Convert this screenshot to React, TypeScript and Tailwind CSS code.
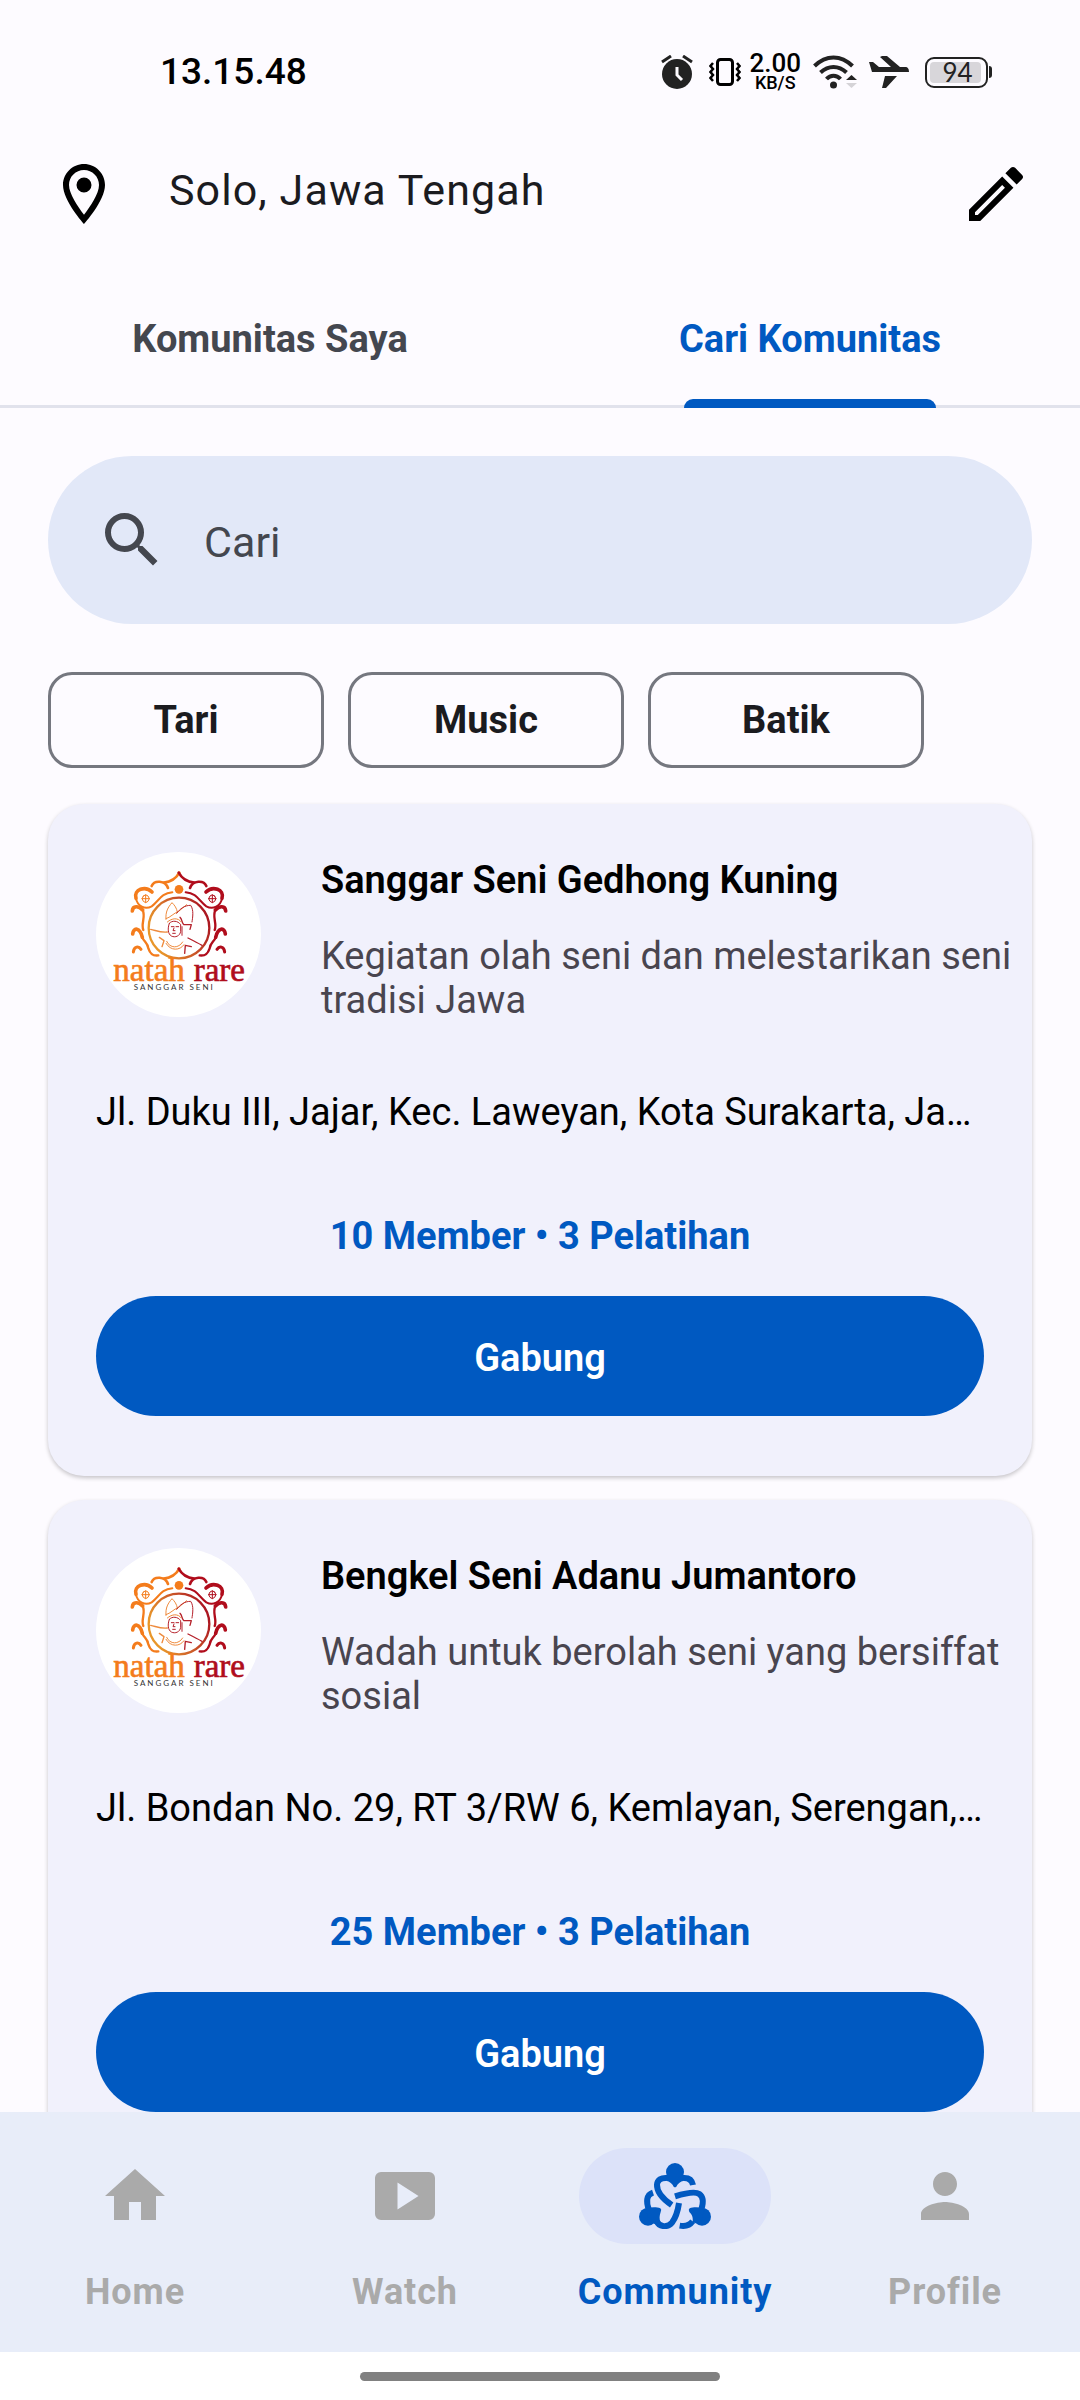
import { useState } from "react";
import type { ReactNode } from "react";

type Community = {
  name: string;
  description: string;
  address: string;
  members: number;
  trainings: number;
};

const communities: Community[] = [
  {
    name: "Sanggar Seni Gedhong Kuning",
    description: "Kegiatan olah seni dan melestarikan seni tradisi Jawa",
    address: "Jl. Duku III, Jajar, Kec. Laweyan, Kota Surakarta, Jawa Tengah 57144",
    members: 10,
    trainings: 3,
  },
  {
    name: "Bengkel Seni Adanu Jumantoro",
    description: "Wadah untuk berolah seni yang bersiffat sosial",
    address: "Jl. Bondan No. 29, RT 3/RW 6, Kemlayan, Serengan, Kota Surakarta",
    members: 25,
    trainings: 3,
  },
];

function MaterialIcon({ d, className }: { d: string; className: string }) {
  return (
    <svg viewBox="0 0 24 24" fill="currentColor" className={className} aria-hidden="true">
      <path d={d} fillRule="evenodd" />
    </svg>
  );
}

const icons = {
  pin: "M12 2C8.13 2 5 5.13 5 9c0 5.25 7 13 7 13s7-7.75 7-13c0-3.87-3.13-7-7-7zM7 9c0-2.76 2.24-5 5-5s5 2.24 5 5c0 2.88-2.88 7.19-5 9.88C9.92 16.21 7 11.85 7 9zM12 6.5a2.5 2.5 0 1 0 0 5 2.5 2.5 0 0 0 0-5z",
  edit: "M14.06 9.02l.92.92L5.92 19H5v-.92l9.06-9.06M17.66 3c-.25 0-.51.1-.7.29l-1.83 1.83 3.75 3.75 1.83-1.83c.39-.39.39-1.02 0-1.41l-2.34-2.34c-.2-.2-.45-.29-.71-.29zm-3.6 3.19L3 17.25V21h3.75L17.81 9.94l-3.75-3.75z",
  search:
    "M15.5 14h-.79l-.28-.27A6.471 6.471 0 0 0 16 9.5 6.5 6.5 0 1 0 9.5 16c1.61 0 3.09-.59 4.23-1.57l.27.28v.79l5 4.99L20.49 19l-4.99-5zm-6 0C7.01 14 5 11.99 5 9.5S7.01 5 9.5 5 14 7.01 14 9.5 11.99 14 9.5 14z",
  home: "M10 20v-6h4v6h5v-8h3L12 3 2 12h3v8z",
  watch:
    "M4 4h16a2 2 0 0 1 2 2v12a2 2 0 0 1-2 2H4a2 2 0 0 1-2-2V6a2 2 0 0 1 2-2zM9.5 7.5v9l7-4.5z",
  profile:
    "M12 12c2.21 0 4-1.79 4-4s-1.79-4-4-4-4 1.79-4 4 1.79 4 4 4zm0 2c-2.67 0-8 1.34-8 4v2h16v-2c0-2.66-5.33-4-8-4z",
};

function CommunityIcon() {
  return (
    <svg viewBox="237 159 216 198" className="h-[66px] w-[72px]" aria-hidden="true">
      <g fill="currentColor">
        <circle cx="345" cy="186" r="27" />
        <circle cx="264" cy="320" r="27" />
        <circle cx="426" cy="320" r="27" />
        <path d="M318 195H372V212C361 214 352 222 349 230Q345 234 341 230C338 222 329 214 318 212z" />
        <path d="M258 293C275 292 290 290 301 295Q306 299 302 306C298 318 298 326 301 335L284 342L264 330z" />
        <path d="M432 293C415 292 400 290 389 295Q384 299 388 306C396 314 400 322 398 337L408 340L426 330z" />
      </g>
      <g fill="none" stroke="currentColor" strokeWidth="18">
        <path d="M335 285C310 268 290 246 291 224C292 209 304 203 320 204" />
        <path d="M370 204C387 203 396 210 399 225" />
        <path d="M345 259C378 249 405 243 418 252C432 262 430 280 424 298" />
        <path d="M359 347C376 350 388 348 398 334" />
        <path d="M357 279C354 300 348 322 336 338C324 353 298 352 290 334" />
        <path d="M279 248C258 255 258 277 267 300" />
      </g>
    </svg>
  );
}

function LogoFrameHalf() {
  return (
    <g>
      <path d="M298 128C286 150 268 156 252 158" strokeWidth="8" />
      <path d="M215 168C222 150 256 150 264 174" strokeWidth="8" />
      <path d="M216 186C196 166 160 178 168 205" strokeWidth="11" />
      <path d="M168 205C172 228 195 240 215 229C238 212 242 190 277 187" strokeWidth="6" />
      <path d="M157 243C158 226 176 227 188 240" strokeWidth="11" />
      <path d="M188 240C198 262 182 280 190 300" strokeWidth="7" />
      <path d="M158 312C160 291 180 292 187 322" strokeWidth="11" />
      <path d="M187 322C192 336 203 338 205 355C212 376 222 378 235 376" strokeWidth="7" />
      <path d="M160 366C162 349 176 347 183 358" strokeWidth="9" />
      <path
        d="M197 195v22M186 206h22M190 198q7-8 14 0q8 8 0 16q-7 8-14 0q-8-8 0-16z"
        strokeWidth="3"
      />
    </g>
  );
}

function NatahRareLogo() {
  return (
    <svg
      viewBox="48 66 495 495"
      className="size-[165px] shrink-0 rounded-full bg-white"
      role="img"
      aria-label="natah rare sanggar seni"
    >
      <defs>
        <linearGradient id="natah-ring" x1="0" x2="1" y1="0.7" y2="0.3">
          <stop offset="0.1" stopColor="#e8962a" />
          <stop offset="0.55" stopColor="#cc5a28" />
          <stop offset="1" stopColor="#a81020" />
        </linearGradient>
      </defs>
      <g fill="none" strokeLinecap="round" strokeLinejoin="round">
        <g stroke="#f47c1c">
          <LogoFrameHalf />
        </g>
        <g stroke="#b00d1c" transform="translate(594 0) scale(-1 1)">
          <LogoFrameHalf />
        </g>
        <circle cx="297" cy="294" r="91" stroke="url(#natah-ring)" strokeWidth="7" />
        <g stroke="#ee8a3c" strokeWidth="3">
          <path d="M258 268C256 245 264 232 276 218C284 226 290 234 292 246" />
          <path d="M258 266C272 262 280 250 296 244L320 224" />
          <path d="M262 276C276 264 294 262 304 276" />
          <path d="M212 298C230 302 240 308 262 306M238 322L252 332L246 350" strokeWidth="4" />
          <path d="M260 334C270 356 296 356 308 336M258 340C272 364 300 362 312 344" />
        </g>
        <g stroke="#b5202a" strokeWidth="3">
          <path d="M290 250C300 236 314 226 332 226C342 240 338 262 336 276" />
          <path d="M300 262C308 270 304 278 312 284H334L330 298" strokeWidth="4" />
          <path d="M268 280C262 296 264 312 274 318C286 324 300 318 302 304V284C294 272 276 270 268 280" />
          <path d="M274 290h8M288 290h8M282 294l-3 8h6M278 310h8M306 290v26" />
          <path d="M324 324C340 332 352 338 366 346M314 370L316 346L334 350" strokeWidth="4" />
        </g>
      </g>
      <circle cx="297" cy="178" r="13" fill="#f47c1c" />
      <g fontFamily="'Liberation Serif', serif" fontSize="99">
        <text x="100" y="453" fill="#f47c1c" stroke="#f47c1c" strokeWidth="2">
          natah
        </text>
        <text x="341" y="453" fill="#b00d1c" stroke="#b00d1c" strokeWidth="2">
          rare
        </text>
      </g>
      <text
        x="161"
        y="480"
        fontSize="24"
        letterSpacing="6"
        fontFamily="Lato, sans-serif"
        fill="#333333"
      >
        SANGGAR SENI
      </text>
    </svg>
  );
}

function StatusBar() {
  return (
    <div className="flex h-36 items-center justify-between pr-[88px] pl-40">
      <span className="text-[37px] leading-[48px] font-medium text-black">13.15.48</span>
      <div className="flex items-center text-[#222222]">
        <svg viewBox="0 0 32 34" className="mr-4 h-[34px] w-8" aria-hidden="true">
          <circle cx="16" cy="19" r="15" fill="currentColor" />
          <path d="M1 7l9-6M31 7l-9-6" stroke="currentColor" strokeWidth="3" />
          <path d="M16 12v8l5 5" fill="none" stroke="#fdfbff" strokeWidth="3" />
        </svg>
        <svg viewBox="0 0 32 28" className="mr-2 h-7 w-8 text-black" aria-hidden="true">
          <g fill="none" stroke="currentColor">
            <rect x="8.5" y="1.5" width="15" height="25" rx="3" strokeWidth="3" />
            <path
              d="M4 5L1.5 8 4 11 1.5 14 4 17 1.5 20 4 23M28 5l2.500 3-2.500 3 2.500 3-2.500 3 2.500 3-2.500 3"
              strokeWidth="2.5"
            />
          </g>
        </svg>
        <div className="mr-3 flex flex-col items-center font-medium text-black">
          <span className="text-[26px] leading-[22px]">2.00</span>
          <span className="text-[18px] leading-[18px]">KB/S</span>
        </div>
        <svg viewBox="0 0 44 34" className="mr-3 h-[34px] w-11" aria-hidden="true">
          <g fill="none" stroke="currentColor" strokeWidth="4">
            <path d="M1.500 11C13-.5 28-.5 39.500 11" />
            <path d="M7.500 17.500c8-7.500 18-7.500 26 0" />
            <path d="M13.500 24c4-4.500 10-4.500 14 0" />
          </g>
          <circle cx="20.5" cy="30" r="3.5" fill="currentColor" />
          <path d="M33 25l5.500-5 5.500 5z" fill="currentColor" />
          <path d="M33 28l5.500 5 5.500-5z" fill="#d5d3d7" />
        </svg>
        <svg viewBox="0 0 40 32" className="mr-4 h-8 w-10" fill="currentColor" aria-hidden="true">
          <path d="M0 6h4l6 5h12L11 1l2-1h5l13 11h5c3 0 4 2 4 5H3zM16 20h12L17 32h-4z" />
        </svg>
        <div className="flex items-center">
          <div className="flex h-[31px] w-[63px] rounded-[9px] border-2 border-[#222222] p-[3px]">
            <div className="flex w-[51px] items-center justify-center rounded-[4px] bg-[#d8d6da] pl-1 font-[Lato] text-[26px] leading-[22px]">
              94
            </div>
          </div>
          <div className="ml-px h-3 w-[3px] rounded-r-sm bg-[#222222]" />
        </div>
      </div>
    </div>
  );
}

function CommunityCard({ community }: { community: Community }) {
  return (
    <article className="shrink-0 rounded-[36px] bg-[#f1f1fc] pt-12 pb-[60px] shadow-[0_2px_4px_rgba(0,0,0,0.22)]">
      <div className="flex gap-[60px] pr-5 pl-12">
        <NatahRareLogo />
        <div className="min-w-0 flex-1 pt-1">
          <h2 className="text-[38px] leading-[48px] font-semibold text-black">{community.name}</h2>
          <p className="mt-[30px] text-[38px] leading-[44px] text-[#49454f]">
            {community.description}
          </p>
        </div>
      </div>
      <div className="px-12">
        <p className="mt-[66px] truncate text-[38px] leading-[48px] text-black">
          {community.address}
        </p>
        <p className="mt-[76px] text-center text-[38px] leading-[48px] font-bold text-[#0059c1]">
          {community.members} Member • {community.trainings} Pelatihan
        </p>
        <button
          type="button"
          className="mt-9 h-[120px] w-full rounded-full bg-[#0059c1] pt-1 text-[38px] leading-[48px] font-semibold text-white"
        >
          Gabung
        </button>
      </div>
    </article>
  );
}

function NavItem({
  label,
  active,
  onSelect,
  children,
}: {
  label: string;
  active: boolean;
  onSelect: () => void;
  children: ReactNode;
}) {
  return (
    <button
      type="button"
      onClick={onSelect}
      aria-current={active ? "page" : undefined}
      className={
        active
          ? "flex flex-col items-center text-[#0059c1]"
          : "flex flex-col items-center text-[#aaaaaa]"
      }
    >
      <span
        className={
          active
            ? "flex h-24 w-48 items-center justify-center rounded-full bg-[#dce2f9]"
            : "flex h-24 w-48 items-center justify-center rounded-full"
        }
      >
        {children}
      </span>
      <span className="mt-6 text-[36px] leading-[48px] font-bold tracking-wide">{label}</span>
    </button>
  );
}

export default function App() {
  const [tab, setTab] = useState("Cari Komunitas");
  const [page, setPage] = useState("Community");

  return (
    <div className="flex h-screen flex-col overflow-hidden bg-[#fdfbff] font-[Roboto,sans-serif]">
      <StatusBar />

      <header className="flex h-[100px] items-center justify-between px-12">
        <div className="flex items-center gap-[49px]">
          <MaterialIcon d={icons.pin} className="size-[72px]" />
          <h1 className="mb-2 text-[43px] leading-[56px] tracking-wide text-[#1b1b1f]">
            Solo, Jawa Tengah
          </h1>
        </div>
        <button type="button" aria-label="Ubah lokasi">
          <MaterialIcon d={icons.edit} className="size-[72px]" />
        </button>
      </header>

      <div role="tablist" className="grid h-[164px] grid-cols-2 border-b-[3px] border-[#e1e2ec]">
        {["Komunitas Saya", "Cari Komunitas"].map((name) => (
          <button
            key={name}
            type="button"
            role="tab"
            aria-selected={tab === name}
            onClick={() => setTab(name)}
            className={
              tab === name
                ? "flex flex-col items-center justify-end text-[#0059c1]"
                : "flex flex-col items-center justify-end text-[#44474f]"
            }
          >
            <span className="mb-9 text-[38px] leading-[48px] font-bold">{name}</span>
            <span
              className={
                tab === name
                  ? "-mb-[3px] h-[9px] w-[252px] rounded-t-[9px] bg-[#0059c1]"
                  : "-mb-[3px] h-[9px] w-[252px]"
              }
            />
          </button>
        ))}
      </div>

      <main className="flex min-h-0 flex-1 flex-col px-12 pt-12">
        <label className="flex h-[168px] shrink-0 items-center gap-9 rounded-full bg-[#e2e8f8] px-12 text-[#44474f]">
          <MaterialIcon d={icons.search} className="size-[72px] shrink-0" />
          <input
            type="search"
            placeholder="Cari"
            aria-label="Cari"
            className="min-w-0 flex-1 bg-transparent pt-1 text-[43px] leading-[56px] outline-none placeholder:text-[#44474f]"
          />
        </label>

        <div className="mt-12 flex shrink-0 gap-6">
          {["Tari", "Music", "Batik"].map((name) => (
            <button
              key={name}
              type="button"
              className="h-24 w-[276px] rounded-3xl border-[3px] border-[#75777f] text-[38px] leading-[48px] font-bold text-[#1b1b1f]"
            >
              {name}
            </button>
          ))}
        </div>

        <section className="-mx-12 mt-6 flex min-h-0 flex-1 flex-col gap-6 overflow-hidden px-12 pt-3">
          {communities.map((community) => (
            <CommunityCard key={community.name} community={community} />
          ))}
        </section>
      </main>

      <nav className="grid h-60 shrink-0 grid-cols-4 bg-[#e8edf9] pt-9">
        <NavItem label="Home" active={page === "Home"} onSelect={() => setPage("Home")}>
          <MaterialIcon d={icons.home} className="size-[72px]" />
        </NavItem>
        <NavItem label="Watch" active={page === "Watch"} onSelect={() => setPage("Watch")}>
          <MaterialIcon d={icons.watch} className="size-[72px]" />
        </NavItem>
        <NavItem
          label="Community"
          active={page === "Community"}
          onSelect={() => setPage("Community")}
        >
          <CommunityIcon />
        </NavItem>
        <NavItem label="Profile" active={page === "Profile"} onSelect={() => setPage("Profile")}>
          <MaterialIcon d={icons.profile} className="size-[72px]" />
        </NavItem>
      </nav>

      <div className="flex h-12 shrink-0 items-center justify-center bg-white">
        <div className="h-[9px] w-1/3 rounded-full bg-[#808080]" />
      </div>
    </div>
  );
}
